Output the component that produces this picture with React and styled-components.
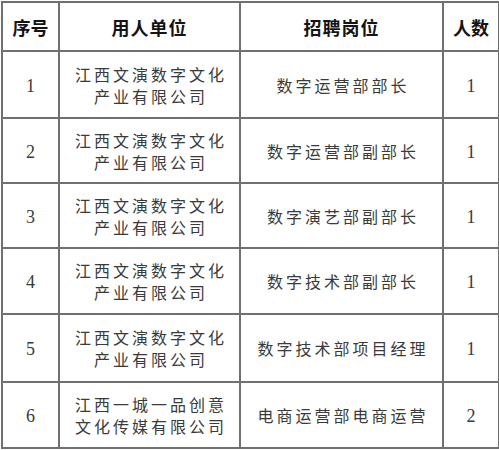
import styled, { createGlobalStyle } from "styled-components";

const GlobalStyle = createGlobalStyle`
  html, body {
    margin: 0;
    padding: 0;
    background: #fff;
  }
`;

const Page = styled.div`
  padding: 1px 0 0 1px;
  width: 499px;
  height: 450px;
  box-sizing: border-box;
  background: #fff;
`;

const Table = styled.table`
  width: 497px;
  border-collapse: collapse;
  table-layout: fixed;
  font-family: "Noto Sans CJK SC", "Liberation Serif", serif;
`;

const HeadCell = styled.th`
  height: 47px;
  padding: 0;
  border: 2px solid #707070;
  font-size: 18px;
  font-weight: 700;
  color: #141414;
  letter-spacing: ${(p) => (p.$wide ? "1px" : "0")};
  text-align: center;
  vertical-align: middle;
`;

const Cell = styled.td`
  height: ${(p) => p.$h}px;
  padding: 0;
  border: 2px solid #707070;
  text-align: center;
  vertical-align: middle;
  color: #3a3a3a;
`;

const Num = styled.span`
  font-family: "Liberation Serif", serif;
  font-size: 18px;
`;

const CjkText = styled.div`
  font-size: 16px;
  line-height: 22px;
  letter-spacing: 3px;
  padding-left: 3px;
  font-weight: 400;
`;

const rows = [
  { no: "1", unit: ["江西文演数字文化", "产业有限公司"], job: "数字运营部部长", count: "1", h: 65 },
  { no: "2", unit: ["江西文演数字文化", "产业有限公司"], job: "数字运营部副部长", count: "1", h: 63 },
  { no: "3", unit: ["江西文演数字文化", "产业有限公司"], job: "数字演艺部副部长", count: "1", h: 63 },
  { no: "4", unit: ["江西文演数字文化", "产业有限公司"], job: "数字技术部副部长", count: "1", h: 64 },
  { no: "5", unit: ["江西文演数字文化", "产业有限公司"], job: "数字技术部项目经理", count: "1", h: 66 },
  { no: "6", unit: ["江西一城一品创意", "文化传媒有限公司"], job: "电商运营部电商运营", count: "2", h: 64 },
];

export default function App() {
  return (
    <Page>
      <GlobalStyle />
      <Table>
        <colgroup>
          <col style={{ width: 57 }} />
          <col style={{ width: 181 }} />
          <col style={{ width: 203 }} />
          <col style={{ width: 56 }} />
        </colgroup>
        <thead>
          <tr>
            <HeadCell>序号</HeadCell>
            <HeadCell $wide>用人单位</HeadCell>
            <HeadCell $wide>招聘岗位</HeadCell>
            <HeadCell>人数</HeadCell>
          </tr>
        </thead>
        <tbody>
          {rows.map((r) => (
            <tr key={r.no}>
              <Cell $h={r.h}>
                <Num>{r.no}</Num>
              </Cell>
              <Cell $h={r.h}>
                <CjkText>
                  {r.unit[0]}
                  <br />
                  {r.unit[1]}
                </CjkText>
              </Cell>
              <Cell $h={r.h}>
                <CjkText>{r.job}</CjkText>
              </Cell>
              <Cell $h={r.h}>
                <Num>{r.count}</Num>
              </Cell>
            </tr>
          ))}
        </tbody>
      </Table>
    </Page>
  );
}
